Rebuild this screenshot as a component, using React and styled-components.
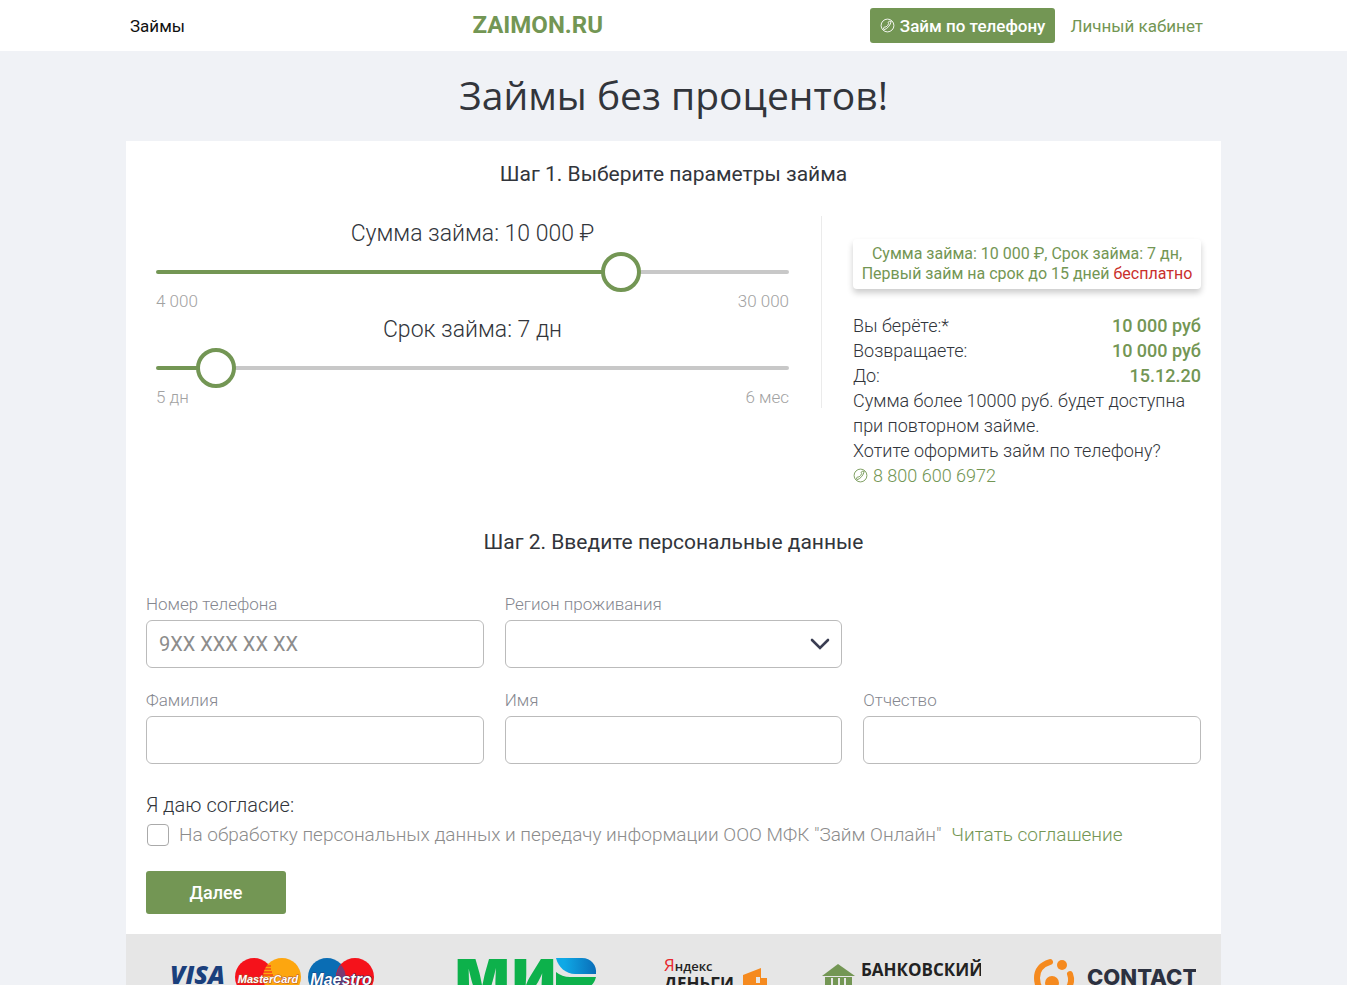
import React, { useState } from 'react';
import styled, { createGlobalStyle } from 'styled-components';

const green = '#739654';

const GlobalStyle = createGlobalStyle`
    * {
        box-sizing: border-box;
    }

    body {
        margin: 0;
        background-color: #f0f2f6;
        color: #32353b;
        font-family: Roboto, 'Open Sans', 'DejaVu Sans', sans-serif;
        font-weight: 300;
    }

    a {
        color: ${green};
        text-decoration: none;
    }
`;

// 4 000 - 10 000 by hundreds, then by thousands
const getAmount = (step) => (step <= 60 ? 4000 + step * 100 : 10000 + (step - 60) * 1000);

// 5 - 30 days, then 2 - 6 months
const getTerm = (step) => (step <= 25 ? `${step + 5} дн` : `${step - 24} мес`);

const formatSum = (sum) => String(sum).replace(/(\d)(?=(\d{3})+$)/g, '$1 ');

function Range({ id, title, value, max, from, to, onChange }) {
    return (
        <RangeBlock>
            <RangeTitle htmlFor={id}>{title}</RangeTitle>
            <RangeInput
                id={id}
                type="range"
                min="0"
                max={max}
                value={value}
                onChange={(e) => onChange(Number(e.target.value))}
                style={{ '--fill': `${(value / max) * 100}%` }}
            />
            <RangeLimits>
                <span>{from}</span>
                <span>{to}</span>
            </RangeLimits>
        </RangeBlock>
    );
}

function Field({ id, label, ...rest }) {
    return (
        <FieldBlock>
            <FieldLabel htmlFor={id}>{label}</FieldLabel>
            <Input id={id} name={id} {...rest} />
        </FieldBlock>
    );
}

function PhoneIcon() {
    return (
        <svg width="15" height="15" viewBox="0 0 15 15" fill="none" stroke="currentColor" aria-hidden="true">
            <circle cx="7.5" cy="7.5" r="6.4" strokeWidth="0.9" />
            <path d="M4.2 11.8L3.4 9.9L5.2 8.7L5.9 9.2Q7.8 7.6 8.7 5.6L8 4.9L9.2 3.1L11.2 3.4Q10.6 6.2 8.8 8.4Q6.9 10.8 4.2 11.8z" strokeWidth="0.9" strokeLinejoin="round" />
        </svg>
    );
}

function CardLogos() {
    return (
        <svg width="236" height="52" viewBox="0 0 236 52" role="img" aria-label="Visa, MasterCard, Maestro">
            <text x="2" y="27" fill="#1a3f7c" fontFamily="Open Sans, sans-serif" fontSize="25" fontWeight="800" fontStyle="italic">VISA</text>
            <circle cx="86" cy="20" r="19" fill="#f5121b" />
            <circle cx="114" cy="20" r="19" fill="#fda60f" />
            <path d="M95 9h8M93 12h10M92 15h12M91 18h14" stroke="#f5121b" strokeWidth="1" />
            <text x="100" y="26" textAnchor="middle" fill="#fff" stroke="#b5532a" strokeWidth="1" paintOrder="stroke" fontFamily="Liberation Sans, sans-serif" fontSize="11" fontWeight="700" fontStyle="italic">MasterCard</text>
            <circle cx="159" cy="20" r="19" fill="#0a6db4" />
            <circle cx="187" cy="20" r="19" fill="#f5121b" />
            <path d="M173 8a19 19 0 0 1 0 25a19 19 0 0 1 0-25z" fill="#7a3a72" />
            <text x="173" y="28" textAnchor="middle" fill="#fff" stroke="#233c78" strokeWidth="1" paintOrder="stroke" fontFamily="Liberation Sans, sans-serif" fontSize="16" fontWeight="700" fontStyle="italic">Maestro</text>
        </svg>
    );
}

function MirLogo() {
    return (
        <svg width="154" height="52" viewBox="0 0 154 52" role="img" aria-label="МИР">
            <defs>
                <linearGradient id="mir">
                    <stop offset="0.2" stopColor="#0fa9e6" />
                    <stop offset="1" stopColor="#0a6db8" />
                </linearGradient>
            </defs>
            <text y="43" fill="#0db14b" fontFamily="Inter, sans-serif" fontSize="57" fontWeight="900">
                <tspan x="-2">М</tspan>
                <tspan x="55">И</tspan>
            </text>
            <path d="M99 15q6 5 14 5h26q-3 12-15 12h-12v10h-13z" fill="#0db14b" />
            <path d="M99 1h26c9 0 15 7 14 16h-21c-9 0-17-7-19-16z" fill="url(#mir)" />
        </svg>
    );
}

function YandexLogo() {
    return (
        <svg width="106" height="52" viewBox="0 0 106 52" role="img" aria-label="Яндекс Деньги">
            <text x="0" y="14" fontFamily="Open Sans, sans-serif" fontSize="13" fontWeight="600" fill="#222">
                <tspan fill="#e8262d" fontSize="17" fontWeight="400">Я</tspan>ндекс
            </text>
            <text x="0" y="33" fontFamily="Open Sans, sans-serif" fontSize="17" fontWeight="700" fill="#222">ДЕНЬГИ</text>
            <path d="M79 18l18-7v10h6v18H79z" fill="#f58a1f" />
            <path d="M92 20h4v6h-4z" fill="#e6e6e6" />
        </svg>
    );
}

function BankLogo() {
    return (
        <svg width="159" height="52" viewBox="0 0 159 52" role="img" aria-label="Банковский перевод">
            <path d="M0 19L16 7l17 12z" fill="#739654" />
            <path d="M3 20h27v18H3z" fill="#739654" />
            <path d="M10 21v14M17 21v14M23 21v14" stroke="#e6e6e6" strokeWidth="2" />
            <text x="39" y="19" fontFamily="Open Sans, sans-serif" fontSize="17" fontWeight="700" fill="#222">БАНКОВСКИЙ</text>
        </svg>
    );
}

function ContactLogo() {
    return (
        <svg width="162" height="52" viewBox="0 0 162 52" role="img" aria-label="CONTACT">
            <g fill="none" stroke="#f58a1f" strokeWidth="6" strokeLinecap="round">
                <path d="M16 5Q3 9 3 21q0 6 3 11" />
                <path d="M36 17q3 8-2 15" />
            </g>
            <circle cx="28" cy="8" r="5" fill="#f58a1f" />
            <circle cx="18" cy="26" r="7" fill="#f58a1f" />
            <text x="53" y="28" fontFamily="Inter, sans-serif" fontSize="22" fontWeight="800" fill="#2c3140">CONTACT</text>
        </svg>
    );
}

function App() {
    const [amountStep, setAmountStep] = useState(60);
    const [termStep, setTermStep] = useState(2);

    const amount = formatSum(getAmount(amountStep));
    const term = getTerm(termStep);

    return (
        <>
            <GlobalStyle />
            <Header>
                <HeaderInner>
                    <HeaderNav>
                        <NavLink href="#loans">Займы</NavLink>
                    </HeaderNav>
                    <Logo href="#home">ZAIMON.RU</Logo>
                    <HeaderActions>
                        <PhoneButton type="button"><PhoneIcon /> Займ по телефону</PhoneButton>
                        <AccountLink href="#account">Личный кабинет</AccountLink>
                    </HeaderActions>
                </HeaderInner>
            </Header>

            <Container>
                <PageTitle>Займы без процентов!</PageTitle>
                <Card>
                    <StepTitle>Шаг 1. Выберите параметры займа</StepTitle>
                    <Calculator>
                        <Ranges>
                            <Range
                                id="amount"
                                title={`Сумма займа: ${amount} ₽`}
                                value={amountStep}
                                max={80}
                                from="4 000"
                                to="30 000"
                                onChange={setAmountStep}
                            />
                            <Range
                                id="term"
                                title={`Срок займа: ${term}`}
                                value={termStep}
                                max={30}
                                from="5 дн"
                                to="6 мес"
                                onChange={setTermStep}
                            />
                        </Ranges>
                        <Summary>
                            <Offer>
                                Сумма займа: {amount} ₽, Срок займа: {term},<br />
                                Первый займ на срок до 15 дней <em>бесплатно</em>
                            </Offer>
                            <SummaryRow>Вы берёте:* <b>{amount} руб</b></SummaryRow>
                            <SummaryRow>Возвращаете: <b>{amount} руб</b></SummaryRow>
                            <SummaryRow>До: <b>15.12.20</b></SummaryRow>
                            <SummaryText>Сумма более 10000 руб. будет доступна при повторном займе.</SummaryText>
                            <SummaryText>Хотите оформить займ по телефону?</SummaryText>
                            <PhoneLink href="tel:88006006972"><PhoneIcon /> 8 800 600 6972</PhoneLink>
                        </Summary>
                    </Calculator>

                    <StepTitle>Шаг 2. Введите персональные данные</StepTitle>
                    <form onSubmit={(e) => e.preventDefault()}>
                        <FieldRow>
                            <Field id="phone" label="Номер телефона" type="tel" placeholder="9XX XXX XX XX" />
                            <FieldBlock>
                                <FieldLabel htmlFor="region">Регион проживания</FieldLabel>
                                <SelectWrap>
                                    <Select id="region" name="region" defaultValue="">
                                        <option value="" />
                                    </Select>
                                    <svg width="20" height="12" viewBox="0 0 20 12" aria-hidden="true">
                                        <path d="M2 2l8 8 8-8" fill="none" stroke="#3a3d52" strokeWidth="2.6" strokeLinecap="round" />
                                    </svg>
                                </SelectWrap>
                            </FieldBlock>
                        </FieldRow>
                        <FieldRow>
                            <Field id="surname" label="Фамилия" type="text" />
                            <Field id="name" label="Имя" type="text" />
                            <Field id="patronymic" label="Отчество" type="text" />
                        </FieldRow>
                        <ConsentTitle>Я даю согласие:</ConsentTitle>
                        <Consent>
                            <Checkbox type="checkbox" id="consent" />
                            <label htmlFor="consent">
                                На обработку персональных данных и передачу информации ООО МФК "Займ Онлайн"
                            </label>
                            <a href="#agreement">Читать соглашение</a>
                        </Consent>
                        <Submit type="submit">Далее</Submit>
                    </form>
                </Card>
                <Payments>
                    <CardLogos />
                    <MirLogo />
                    <YandexLogo />
                    <BankLogo />
                    <ContactLogo />
                </Payments>
            </Container>
        </>
    );
}

const Header = styled.header`
    background-color: #fff;
`;

const HeaderInner = styled.div`
    display: grid;
    grid-template-columns: 30% 16% 1fr;
    align-items: center;
    max-width: 1095px;
    margin: 0 auto;
    padding: 8px 18px 8px 4px;
`;

const HeaderNav = styled.nav`
    display: flex;
`;

const NavLink = styled.a`
    color: #111;
    font-size: 17px;
    line-height: 18px;
    font-weight: 400;
`;

const Logo = styled.a`
    font-size: 24px;
    line-height: 35px;
    font-weight: 700;
    text-align: center;
`;

const HeaderActions = styled.div`
    display: flex;
    align-items: center;
    justify-content: flex-end;
    gap: 15px;
`;

const PhoneButton = styled.button`
    display: flex;
    align-items: center;
    gap: 5px;
    height: 35px;
    padding: 0 10px;
    border: 0;
    border-radius: 3px;
    background-color: ${green};
    color: #fff;
    font-family: inherit;
    font-size: 17px;
    line-height: 18px;
    font-weight: 500;
    white-space: nowrap;
`;

const AccountLink = styled.a`
    font-size: 17px;
    line-height: 18px;
    font-weight: 400;
    white-space: nowrap;
`;

const Container = styled.main`
    max-width: 1095px;
    margin: 0 auto;
`;

const PageTitle = styled.h1`
    margin: 0;
    padding: 16px 0 18px;
    font-family: 'Open Sans', 'Noto Sans', sans-serif;
    font-size: 39px;
    line-height: 56px;
    font-weight: 400;
    text-align: center;
`;

const Card = styled.div`
    padding: 20px;
    background-color: #fff;
`;

const StepTitle = styled.h2`
    margin: 0;
    font-size: 21px;
    line-height: 26px;
    font-weight: 400;
    text-align: center;
`;

const Calculator = styled.section`
    display: flex;
    align-items: flex-start;
    margin: 29px 0 41px;
`;

const Ranges = styled.div`
    flex: 1;
    padding: 0 32px 0 10px;
    border-right: 1px solid #ebebeb;
`;

const RangeBlock = styled.div`
    display: flex;
    flex-direction: column;
    height: 96px;
`;

const RangeTitle = styled.label`
    font-size: 23px;
    line-height: 36px;
    text-align: center;
`;

const RangeInput = styled.input`
    appearance: none;
    width: 100%;
    height: 40px;
    margin: 0;
    background: transparent;

    &::-webkit-slider-runnable-track {
        height: 4px;
        border-radius: 2px;
        background: linear-gradient(to right, ${green} var(--fill), #c8c8c8 var(--fill));
    }

    &::-webkit-slider-thumb {
        appearance: none;
        width: 40px;
        height: 40px;
        margin-top: -18px;
        border: 4px solid ${green};
        border-radius: 50%;
        background-color: #fff;
    }
`;

const RangeLimits = styled.div`
    display: flex;
    justify-content: space-between;
    color: #a2a2a2;
    font-size: 17px;
    line-height: 18px;
`;

const Summary = styled.div`
    width: 379px;
    padding: 23px 0 0 31px;
    font-size: 18px;
    line-height: 25px;
`;

const Offer = styled.p`
    margin: 0 0 24px;
    padding: 5px 0;
    border-radius: 4px;
    box-shadow: 0 4px 6px rgba(0, 0, 0, 0.2);
    color: ${green};
    font-size: 16px;
    line-height: 20px;
    font-weight: 400;
    text-align: center;

    em {
        color: #c9302c;
        font-style: normal;
    }
`;

const SummaryRow = styled.div`
    display: flex;
    justify-content: space-between;

    b {
        color: ${green};
        font-weight: 500;
    }
`;

const SummaryText = styled.p`
    margin: 0;
`;

const PhoneLink = styled.a`
    display: flex;
    align-items: center;
    gap: 5px;
`;

const FieldRow = styled.div`
    display: grid;
    grid-template-columns: repeat(3, 1fr);
    gap: 21px;
    padding-top: 20px;

    &:first-child {
        padding-top: 37px;
    }
`;

const FieldBlock = styled.div`
    display: flex;
    flex-direction: column;
`;

const FieldLabel = styled.label`
    color: #85878f;
    font-size: 17px;
    line-height: 24px;
    padding-bottom: 4px;
`;

const Input = styled.input`
    width: 100%;
    height: 48px;
    padding: 0 12px;
    border: 1px solid #bbb;
    border-radius: 6px;
    background-color: #fff;
    font-family: inherit;
    font-size: 20px;

    &::placeholder {
        color: #8c8c8c;
    }
`;

const SelectWrap = styled.div`
    position: relative;

    svg {
        position: absolute;
        top: 18px;
        right: 12px;
        pointer-events: none;
    }
`;

const Select = styled(Input).attrs({ as: 'select' })`
    display: block;
    appearance: none;
`;

const ConsentTitle = styled.div`
    padding-top: 27px;
    font-size: 20px;
    line-height: 28px;
`;

const Consent = styled.div`
    display: flex;
    align-items: center;
    gap: 10px;
    padding-bottom: 21px;
    color: #8c8c8c;
    font-size: 19px;
    line-height: 31px;
`;

const Checkbox = styled.input`
    appearance: none;
    width: 22px;
    height: 22px;
    margin: 0 0 0 1px;
    border: 1px solid #aaa;
    border-radius: 4px;
    background-color: #fff;

    &:checked {
        background-color: ${green};
    }
`;

const Submit = styled.button`
    display: block;
    width: 140px;
    height: 43px;
    border: 0;
    border-radius: 3px;
    background-color: ${green};
    color: #fff;
    font-family: inherit;
    font-size: 18px;
    font-weight: 500;
`;

const Payments = styled.footer`
    display: flex;
    justify-content: space-between;
    padding: 23px 25px 20px 42px;
    background-color: #e6e6e6;
`;

export default App;
